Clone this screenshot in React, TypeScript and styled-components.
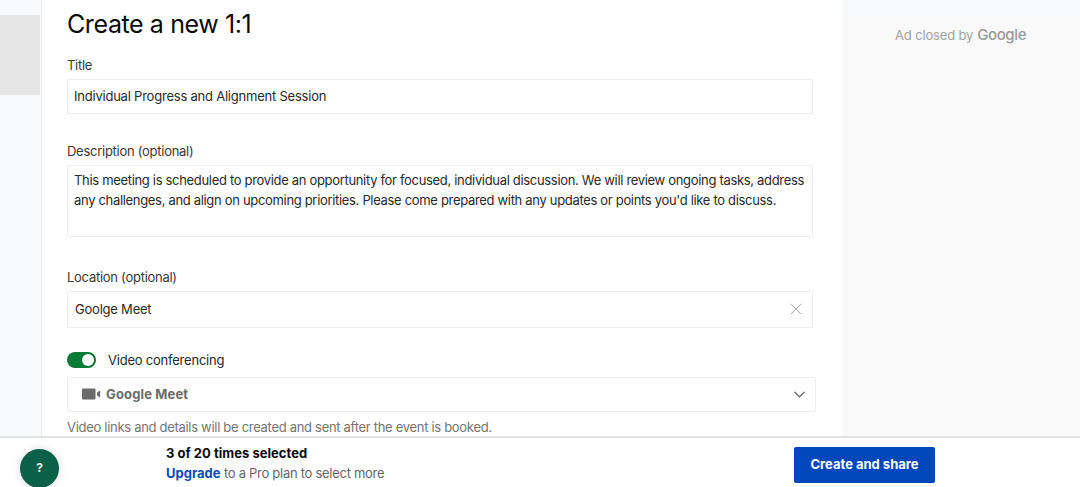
import React from 'react';
import styled, { createGlobalStyle } from 'styled-components';
import { ChevronDown, X } from 'lucide-react';

const Global = createGlobalStyle`
	html,
	body {
		margin: 0;
		padding: 0;
		background: #fff;
	}
	* {
		box-sizing: border-box;
	}
`;

const Page = styled.div`
	width: 1080px;
	height: 487px;
	display: flex;
	flex-direction: column;
	overflow: hidden;
	position: relative;
	font-family: Inter, 'Liberation Sans', sans-serif;
	color: #1a1a1a;
`;

const Columns = styled.div`
	flex: 0 0 436px;
	display: grid;
	grid-template-columns: 42px 800px 238px;
	overflow: hidden;
`;

const LeftRail = styled.div`
	background: #f8f9fa;
	border-right: 1px solid #e9eaeb;
	padding: 15px 1px 0 0;
`;

const RailBlock = styled.div`
	height: 80px;
	background: #e6e6e7;
`;

const Main = styled.main`
	padding: 8px 0 0 25px;
	display: flex;
	flex-direction: column;
	align-items: flex-start;
`;

const Heading = styled.h1`
	margin: 0;
	font-size: 25px;
	line-height: 32px;
	font-weight: 400;
	color: #0a0a0a;
	letter-spacing: -0.4px;
`;

const Label = styled.label<{ $top: number }>`
	display: block;
	margin-top: ${({ $top }) => $top}px;
	font-size: 13px;
	line-height: 18px;
	letter-spacing: -0.27px;
	color: #3a3a3a;
`;

const Field = styled.div<{ $height: number; $width?: number; $gap?: number }>`
	width: ${({ $width }) => $width ?? 746}px;
	height: ${({ $height }) => $height}px;
	margin-top: ${({ $gap }) => $gap ?? 5}px;
	border: 1px solid #ececec;
	border-radius: 2px;
	padding: 0 6px 1px;
	display: flex;
	align-items: center;
	justify-content: space-between;
	font-size: 13px;
	letter-spacing: -0.22px;
	color: #2a2a2a;
	background: #fff;
`;

const TextBlock = styled(Field)`
	align-items: flex-start;
	padding-top: 5px;
	line-height: 19.5px;
	letter-spacing: -0.32px;
`;

const LocationValue = styled.span`
	padding-left: 1px;
`;

const ToggleRow = styled.div`
	display: flex;
	align-items: center;
	gap: 12px;
	margin-top: 23px;
	font-size: 13px;
	line-height: 18px;
	letter-spacing: -0.22px;
	color: #2a2a2a;
`;

const Toggle = styled.span`
	width: 29px;
	height: 16px;
	border-radius: 8px;
	background: #0b7a34;
	display: flex;
	justify-content: flex-end;
	align-items: center;
	padding-right: 2px;
`;

const Knob = styled.span`
	width: 12px;
	height: 12px;
	border-radius: 50%;
	background: #fff;
`;

const MeetChoice = styled.span`
	display: flex;
	align-items: center;
	gap: 5px;
	padding-left: 8px;
	font-weight: 700;
	letter-spacing: 0.15px;
	color: #6b6b6b;
`;

const Hint = styled.p`
	margin: 6px 0 0;
	font-size: 13px;
	line-height: 18px;
	letter-spacing: -0.3px;
	color: #757575;
	white-space: nowrap;
`;

const AdColumn = styled.aside`
	background: #f9f9f9;
`;

const AdTop = styled.div`
	height: 14px;
	background: #f8f9fb;
`;

const AdNote = styled.div`
	padding: 11px 0 0 53px;
	display: flex;
	align-items: baseline;
	gap: 4px;
	font-size: 13px;
	letter-spacing: -0.15px;
	color: #a3a3a3;
`;

const GoogleMark = styled.span`
	font-size: 15px;
	font-weight: 500;
	color: #9a9a9a;
	letter-spacing: -0.4px;
`;

const Footer = styled.footer`
	flex: 1;
	background: #fff;
	border-top: 2px solid #e2e2e2;
	display: flex;
	align-items: center;
	padding: 0 145px 0 166px;
	justify-content: space-between;
`;

const Selection = styled.div`
	font-size: 13px;
	line-height: 20px;
	letter-spacing: -0.28px;
	color: #666;
`;

const SelectionCount = styled.div`
	font-weight: 700;
	letter-spacing: 0.03px;
	color: #0a0a0a;
`;

const UpgradeLink = styled.a`
	font-weight: 700;
	letter-spacing: 0;
	color: #0a4bb5;
`;

const PrimaryButton = styled.button`
	width: 141px;
	height: 36px;
	margin-top: 5px;
	padding: 0 0 2px;
	border: 0;
	border-radius: 2px;
	background: #0047bb;
	color: #fff;
	font: 700 13px Inter, 'Liberation Sans', sans-serif;
`;

const HelpButton = styled.button`
	position: absolute;
	left: 20px;
	top: 449px;
	width: 39px;
	height: 39px;
	padding: 0 0 2px;
	border: 0;
	border-radius: 50%;
	background: #0b6048;
	color: #e8f0ed;
	font: 700 12px Inter, 'Liberation Sans', sans-serif;
	box-shadow: 0 0 10px rgba(0, 0, 0, 0.12);
`;

const VideoIcon = () => (
	<svg width="19" height="12" viewBox="0 0 19 12" fill="#6b6b6b">
		<rect x="0" y="0.5" width="13.5" height="11" rx="1" />
		<path d="M15 4.6 18.2 2.4v7.2L15 7.4z" />
	</svg>
);

export default function App() {
	return (
		<Page>
			<Global />
			<Columns>
				<LeftRail>
					<RailBlock />
				</LeftRail>
				<Main>
					<Heading>Create a new 1:1</Heading>
					<Label $top={16}>Title</Label>
					<Field $height={35}>Individual Progress and Alignment Session</Field>
					<Label $top={28}>Description (optional)</Label>
					<TextBlock $height={72}>
						This meeting is scheduled to provide an opportunity for focused, individual discussion. We will review ongoing tasks, address any challenges, and align on upcoming priorities. Please come prepared with any updates or points you'd like to discuss.
					</TextBlock>
					<Label $top={31}>Location (optional)</Label>
					<Field $height={37}>
						<LocationValue>Goolge Meet</LocationValue>
						<X size={20} color="#a8a8a8" strokeWidth={1.2} />
					</Field>
					<ToggleRow>
						<Toggle>
							<Knob />
						</Toggle>
						Video conferencing
					</ToggleRow>
					<Field $height={35} $width={749} $gap={8}>
						<MeetChoice>
							<VideoIcon />
							Google Meet
						</MeetChoice>
						<ChevronDown size={19} color="#555" strokeWidth={1.5} />
					</Field>
					<Hint>Video links and details will be created and sent after the event is booked.</Hint>
				</Main>
				<AdColumn>
					<AdTop />
					<AdNote>
						Ad closed by <GoogleMark>Google</GoogleMark>
					</AdNote>
				</AdColumn>
			</Columns>
			<Footer>
				<Selection>
					<SelectionCount>3 of 20 times selected</SelectionCount>
					<div>
						<UpgradeLink>Upgrade</UpgradeLink> to a Pro plan to select more
					</div>
				</Selection>
				<PrimaryButton>Create and share</PrimaryButton>
			</Footer>
			<HelpButton>?</HelpButton>
		</Page>
	);
}
